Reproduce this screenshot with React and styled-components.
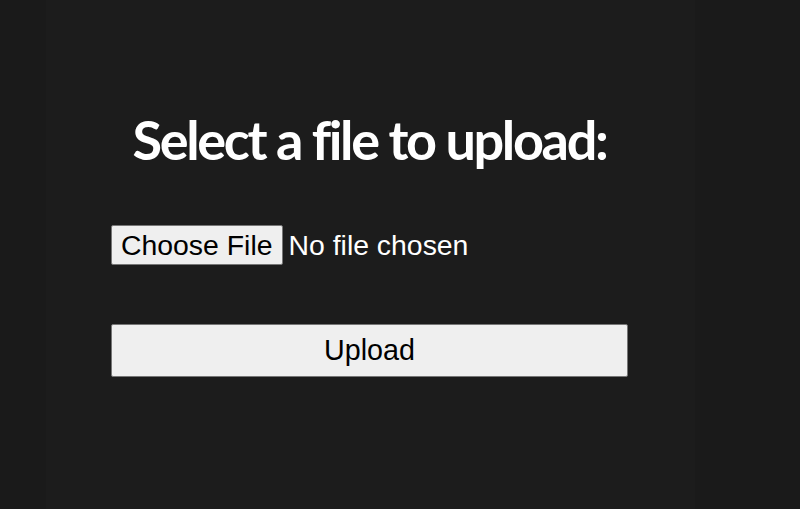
import React from "react";
import styled, { createGlobalStyle } from "styled-components";

const Global = createGlobalStyle`
  html, body { margin: 0; padding: 0; background: #1a1a1a; }
  body { font-family: "Liberation Sans", Arial, sans-serif; }
`;

const Panel = styled.main`
  box-sizing: border-box;
  width: 649px;
  min-height: 509px;
  margin-left: 46px;
  background: #1c1c1c;
  padding: 100px 66px 0 65px;
`;

const Form = styled.form`
  width: 517px;
  display: flex;
  flex-direction: column;
  align-items: stretch;
`;

const Heading = styled.h1`
  margin: 0;
  font-family: "Lato", "Noto Sans", sans-serif;
  font-weight: 700;
  font-size: 54px;
  line-height: 80px;
  color: #ffffff;
  text-align: center;
  letter-spacing: -2.35px;
`;

const FileInput = styled.input`
  margin: 45px 0 0 0;
  padding: 0;
  font-family: "Liberation Sans", Arial, sans-serif;
  font-size: 28.4px;
  color: #ffffff;
  height: 40px;
  align-self: flex-start;

  &::file-selector-button {
    font-family: "Liberation Sans", Arial, sans-serif;
    font-size: 28.4px;
    color: #000000;
    background: #efefef;
    border: 1px solid #767676;
    border-radius: 2px;
    padding: 2px 9px;
    margin: 0 6px 0 0;
    height: 40px;
  }
`;

const UploadButton = styled.button`
  margin-top: 59px;
  height: 53px;
  font-family: "Liberation Sans", Arial, sans-serif;
  font-size: 28.7px;
  color: #000000;
  background: #efefef;
  border: 1px solid #767676;
  border-radius: 2px;
  padding: 0;
`;

export default function App() {
  return (
    <>
      <Global />
      <Panel>
        <Form onSubmit={(e) => e.preventDefault()}>
          <Heading>Select a file to upload:</Heading>
          <FileInput type="file" name="file" />
          <UploadButton type="submit">Upload</UploadButton>
        </Form>
      </Panel>
    </>
  );
}
